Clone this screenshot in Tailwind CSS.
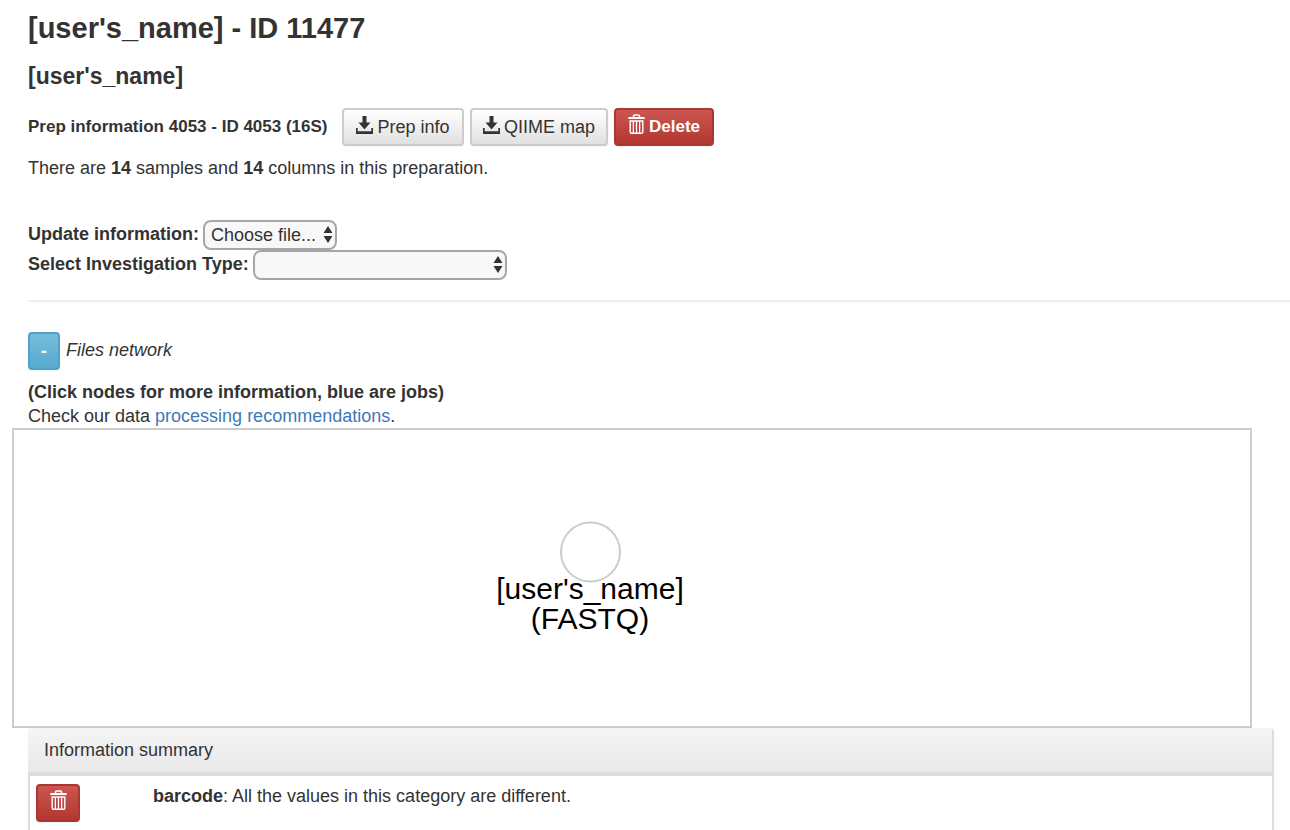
<!DOCTYPE html>
<html lang="en">
<head>
<meta charset="utf-8">
<meta name="viewport" content="width=device-width, initial-scale=1">
<title>Prep information</title>
<script src="https://cdn.jsdelivr.net/npm/@tailwindcss/browser@4"></script>
</head>
<body class="flex min-h-screen flex-col bg-white font-['Helvetica_Neue','Liberation_Sans',sans-serif] text-[18px] leading-6 text-[#333]">
<svg class="hidden" aria-hidden="true">
  <symbol id="download" viewBox="0 0 17 18">
    <path fill="currentColor" d="M6.500 0h4v6.500h4L8.500 13.500 2.500 6.500h4zM0 12h1.700v3.200h13.600V12H17v6H0z"/>
  </symbol>
  <symbol id="trash" viewBox="0 0 17 20">
    <path fill="none" stroke="currentColor" stroke-width="1.500" d="M5.500 3.500V2Q5.500 1 6.500 1h4Q11.500 1 11.500 2v1.500"/>
    <path fill="currentColor" d="M1 3h15q.700 0 .700.700V5H.300V3.700Q.300 3 1 3z"/>
    <path fill="none" stroke="currentColor" stroke-width="1.400" d="M2.200 7h12.600v11q0 1.300-1.300 1.300h-10q-1.300 0-1.300-1.300z"/>
    <path fill="none" stroke="currentColor" stroke-width="1.300" d="M5.350 7v12M8.500 7v12M11.650 7v12"/>
  </symbol>
  <symbol id="updown" viewBox="0 0 10 18">
    <path fill="#333" d="M5 0l4.500 7h-9zM5 17l-4.500-7h9z"/>
  </symbol>
</svg>
<header class="pt-2 pl-7">
  <h1 class="text-[29px] leading-10 font-bold">[user's_name] - ID 11477</h1>
  <h2 class="mt-3 text-[23px] leading-8 font-bold">[user's_name]</h2>
  <div class="mt-4 flex items-center">
    <h3 class="w-[314px] text-[17px] font-bold">Prep information 4053 - ID 4053 (16S)</h3>
    <button class="mr-1.5 flex h-[38px] w-[122px] items-center justify-center gap-1 rounded border-2 border-[#ccc] bg-linear-to-b from-white to-[#e0e0e0] shadow-xs"><svg class="mb-1 h-[18px] w-[17px]"><use href="#download"/></svg>Prep info</button>
    <button class="mr-1.5 flex h-[38px] w-[138px] items-center justify-center gap-1 rounded border-2 border-[#ccc] bg-linear-to-b from-white to-[#e0e0e0] shadow-xs"><svg class="mb-1 h-[18px] w-[17px]"><use href="#download"/></svg>QIIME map</button>
    <button class="flex h-[38px] w-[100px] items-center justify-center gap-1 rounded border-2 border-[#ab3731] bg-linear-to-b from-[#cb5651] to-[#b33630] font-bold text-white shadow-xs"><svg class="mb-1.5 h-5 w-[17px]"><use href="#trash"/></svg><span class="text-[17px]">Delete</span></button>
  </div>
  <p class="mt-2.5">There are <b>14</b> samples and <b>14</b> columns in this preparation.</p>
  <form class="mt-10">
    <div class="flex h-[30px] items-center">
      <label for="file" class="mr-1 mb-0.5 font-bold">Update information:</label>
      <span class="relative">
        <select id="file" class="block h-[30px] w-[134px] appearance-none rounded-lg border-2 border-[#a6a6a6] bg-[#f8f8f8] px-1.5"><option>Choose file...</option></select>
        <svg class="pointer-events-none absolute top-1.5 right-1 h-[18px] w-2.5"><use href="#updown"/></svg>
      </span>
    </div>
    <div class="flex h-[30px] items-center">
      <label for="type" class="mr-1 mb-0.5 font-bold">Select Investigation Type:</label>
      <span class="relative">
        <select id="type" class="block h-[30px] w-[254px] appearance-none rounded-lg border-2 border-[#a6a6a6] bg-[#f8f8f8] px-1.5"><option></option></select>
        <svg class="pointer-events-none absolute top-1.5 right-1 h-[18px] w-2.5"><use href="#updown"/></svg>
      </span>
    </div>
  </form>
  <hr class="mt-5 border-t-2 border-[#eee]">
</header>
<main class="flex flex-1 flex-col pt-[30px]">
  <div class="flex items-center gap-1.5 pl-7">
    <button aria-label="Collapse files network" class="h-[38px] w-8 rounded border-2 border-[#4fa3c8] bg-linear-to-b from-[#75bedb] to-[#56a9d0] font-bold text-white shadow-xs">-</button>
    <i class="mb-0.5">Files network</i>
  </div>
  <p class="mt-2.5 pl-7 font-bold">(Click nodes for more information, blue are jobs)</p>
  <p class="pl-7">Check our data <a href="#" class="text-[#4078b8]">processing recommendations</a>.</p>
  <section aria-label="Files network" class="mr-[38px] ml-3 h-[300px] border-2 border-[#ccc]">
    <svg class="h-full w-full" font-family="'Liberation Sans', sans-serif" font-size="30" text-anchor="middle">
      <circle cx="576.500" cy="122" r="29.500" fill="#fff" stroke="#ccc" stroke-width="2"/>
      <text x="576" y="169">[user's_name]</text>
      <text x="576" y="199">(FASTQ)</text>
    </svg>
  </section>
  <section class="mr-4 ml-7 flex flex-1 flex-col rounded-t border-r-2 border-[#ddd] shadow-xs">
    <h4 class="rounded-t border-b-4 border-[#ddd] bg-linear-to-b from-[#f5f5f5] to-[#e8e8e8] px-4 py-2.5">Information summary</h4>
    <div class="flex flex-1 items-start border-l-2 border-[#ddd] px-1.5 pt-2">
      <div class="w-[117px]">
        <button aria-label="Delete barcode" class="flex h-[38px] w-11 items-center justify-center rounded border-2 border-[#ab3731] bg-linear-to-b from-[#cb5651] to-[#b33630] text-white shadow-xs"><svg class="mb-1.5 h-5 w-[17px]"><use href="#trash"/></svg></button>
      </div>
      <p><b>barcode</b>: All the values in this category are different.</p>
    </div>
  </section>
</main>
</body>
</html>
